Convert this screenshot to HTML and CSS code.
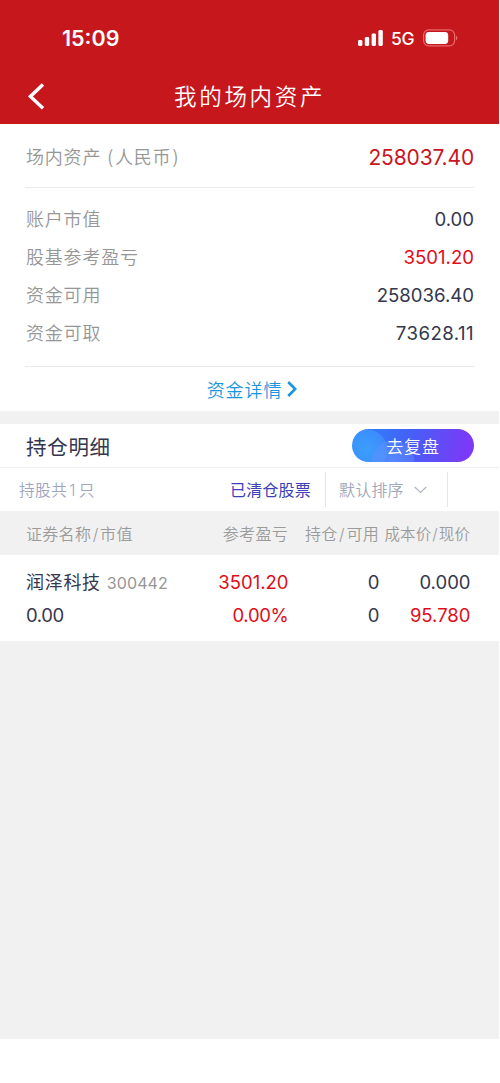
FILE: index.html
```html
<!DOCTYPE html>
<html lang="zh-CN">
<head>
<meta charset="utf-8">
<meta name="viewport" content="width=device-width, initial-scale=1">
<title>我的场内资产</title>
<link rel="stylesheet" href="styles.css">
</head>
<body>
<div class="app">
  <header class="top">
    <div class="status">
      <span class="time">15:09</span>
      <div class="status-icons">
        <svg class="signal" width="25" height="16" viewBox="0 0 25 16" fill="#fff"><rect x="0" y="10" width="4.4" height="6" rx="1.4"/><rect x="6.8" y="7" width="4.4" height="9" rx="1.4"/><rect x="13.6" y="3.6" width="4.4" height="12.4" rx="1.4"/><rect x="20.4" y="0" width="4.4" height="16" rx="1.4"/></svg>
        <span class="network">5G</span>
        <svg class="battery" width="35" height="18" viewBox="0 0 35 18"><rect x=".6" y=".9" width="31" height="16" rx="5.2" fill="none" stroke="#e8686b" stroke-width="1.2"/><rect x="2.6" y="2.9" width="22.6" height="12" rx="3.4" fill="#fff"/><path d="M33 6.4c1.8.8 1.8 4.2 0 5z" fill="#e8686b"/></svg>
      </div>
    </div>
    <nav class="nav">
      <svg class="back" width="18" height="28" viewBox="0 0 18 28" fill="none" stroke="#fff" stroke-width="3.4"><path d="M15 2.4 2.4 14.4 15 26.2"/></svg>
      <h1 class="title">我的场内资产</h1>
    </nav>
  </header>

  <section class="summary">
    <div class="total"><span class="label">场内资产<span class="paren open">(</span>人民币<span class="paren close">)</span></span><span class="total-value">258037.40</span></div>
    <div class="rows">
      <div class="row"><span class="label">账户市值</span><span class="value">0.00</span></div>
      <div class="row"><span class="label">股基参考盈亏</span><span class="value red">3501.20</span></div>
      <div class="row"><span class="label">资金可用</span><span class="value">258036.40</span></div>
      <div class="row"><span class="label">资金可取</span><span class="value spaced">73628.11</span></div>
    </div>
    <div class="detail"><span>资金详情</span><svg width="10" height="16" viewBox="0 0 10 16" fill="none" stroke="#1b95e0" stroke-width="2.6"><path d="M1.2 1 8.2 8l-7 7"/></svg></div>
  </section>

  <section class="holdings">
    <div class="holdings-head">
      <h2 class="holdings-title">持仓明细</h2>
      <div class="review"><span class="review-text">去复盘</span></div>
    </div>
    <div class="filters">
      <span class="count">持股共<span class="count-num">1</span>只</span>
      <span class="cleared">已清仓股票</span>
      <span class="sort"><span class="sort-text">默认排序</span><svg width="13" height="8" viewBox="0 0 13 8" fill="none" stroke="#b4b8c6" stroke-width="1.4"><path d="M.7 1 6.5 6.4 12.3 1"/></svg></span>
    </div>
    <div class="grid table-head">
      <span>证券名称<i class="slash">/</i>市值</span><span>参考盈亏</span><span>持仓<i class="slash">/</i>可用</span><span class="price-head">成本价<i class="slash">/</i>现价</span>
    </div>
    <div class="stock">
      <div class="grid cells"><span class="name">润泽科技<span class="code">300442</span></span><span class="red">3501.20</span><span>0</span><span>0.000</span></div>
      <div class="grid cells"><span>0.00</span><span class="red percent">0.00%</span><span>0</span><span class="red">95.780</span></div>
    </div>
  </section>
  <div class="blank"></div>
</div>
</body>
</html>
```

FILE: styles.css
```css
* { box-sizing: border-box; }
body { margin: 0; background: #fff; font-family: Inter, "Noto Sans CJK SC", sans-serif; color: #34374e; }
.app { width: 499px; height: 1083px; display: flex; flex-direction: column; }
svg { display: block; flex: none; }
h1, h2 { margin: 0; font-weight: 350; }

.top { height: 124px; background: #c6171d; color: #fff; }
.status { height: 68px; padding: 8px 41px 0 62px; display: flex; align-items: center; justify-content: space-between; }
.time { font-size: 21.5px; font-weight: 600; }
.status-icons { display: flex; align-items: center; }
.network { margin: 0 8px; padding-top: 1px; font-size: 17.5px; font-weight: 450; line-height: 20px; width: 24px; letter-spacing: -.2px; }
.nav { height: 56px; padding-left: 28px; display: flex; align-items: center; }
.title { margin-left: 128px; padding-top: 2px; font-size: 22.5px; letter-spacing: 2.7px; line-height: 54px; }

.summary { height: 287px; padding: 0 25px; }
.total { height: 64px; padding-top: 2px; display: flex; align-items: center; justify-content: space-between; border-bottom: 1px solid #ebebeb; }
.label { font-size: 18px; letter-spacing: .8px; font-weight: 350; color: #969696; line-height: 38px; padding: 1px 0 0 1px; }
.total .label { padding-top: 0; }
.paren { font-family: "Noto Sans CJK SC"; }
.open { margin-left: 6px; margin-right: 1px; }
.close { margin-left: 1px; }
.total-value { padding-top: 1px; font-size: 21px; letter-spacing: -.15px; color: #c81623; }
.rows { height: 179px; padding-top: 12px; border-bottom: 1px solid #e9e9e9; }
.row { height: 38px; display: flex; align-items: center; justify-content: space-between; }
.value { padding-bottom: 1px; font-size: 18.6px; }
.spaced { letter-spacing: .45px; }
.red { color: #e00d18; }
.detail { height: 44px; padding-left: 5px; display: flex; align-items: center; justify-content: center; gap: 5px; color: #1b95e0; font-size: 18px; letter-spacing: .9px; font-weight: 350; }
.detail span { margin-top: -1px; }

.holdings { border-top: 13px solid #f1f1f1; }
.holdings-head { height: 44px; padding: 0 25px 0 26px; display: flex; align-items: center; justify-content: space-between; border-bottom: 1px solid #efeff1; }
.holdings-title { font-size: 20.5px; font-weight: 400; letter-spacing: .7px; }
.review { width: 122px; height: 33px; border-radius: 17px; display: flex; align-items: center; justify-content: center; color: #fff; font-size: 17px; font-weight: 350; letter-spacing: .8px;
  background: radial-gradient(circle at 41px 33px, rgba(100,155,255,.6) 0, rgba(100,145,255,.4) 21px, transparent 21.8px), radial-gradient(circle at 15px 21px, rgba(62,170,255,.75) 0, rgba(70,155,255,.55) 20px, transparent 20.8px), linear-gradient(100deg, #2d83fa 8%, #465ff5 48%, #7a3af8 92%); }
.review-text { margin-top: -1px; }
.filters { height: 43px; padding-left: 19px; display: flex; align-items: center; font-size: 16px; letter-spacing: .2px; }
.count { width: 211px; padding-bottom: 1px; color: #9fa5bf; font-weight: 350; font-size: 15.7px; letter-spacing: .4px; }
.count-num { margin: 0 3px 0 2px; }
.cleared { width: 95px; padding-bottom: 2px; color: #4040b6; font-weight: 400; white-space: nowrap; }
.sort { height: 35px; width: 123px; padding-left: 13px; border: 1px solid #e6e6ea; border-width: 0 1px; display: flex; align-items: center; gap: 10px; color: #a2a7b9; font-weight: 350; }
.sort-text { padding-bottom: 1px; }
.grid { display: grid; grid-template-columns: 172px 90px 91px 91px; padding-left: 26px; align-items: center; text-align: right; white-space: nowrap; }
.grid > :first-child { text-align: left; }
.table-head { height: 44px; padding-bottom: 1px; background: #f1f1f1; color: #9b9b9b; font-size: 16px; font-weight: 350; letter-spacing: .3px; }
.table-head .price-head { font-size: 15.5px; letter-spacing: .1px; }
.slash { font-style: normal; margin: 0 1.5px; }
.price-head .slash { margin: 0 1px; }
.stock { height: 86px; padding-top: 10px; }
.cells { height: 33px; padding-left: 26.5px; font-size: 18.5px; }
.cells > :first-child { margin-left: -.5px; letter-spacing: -.4px; }
.percent { letter-spacing: -.3px; }
.cells > .name { font-size: 18px; font-weight: 400; letter-spacing: .7px; margin-top: -2px; }
.code { margin-left: 6px; color: #969696; font-size: 16px; letter-spacing: .1px; }
.blank { height: 398px; background: #f1f1f1; }
```
